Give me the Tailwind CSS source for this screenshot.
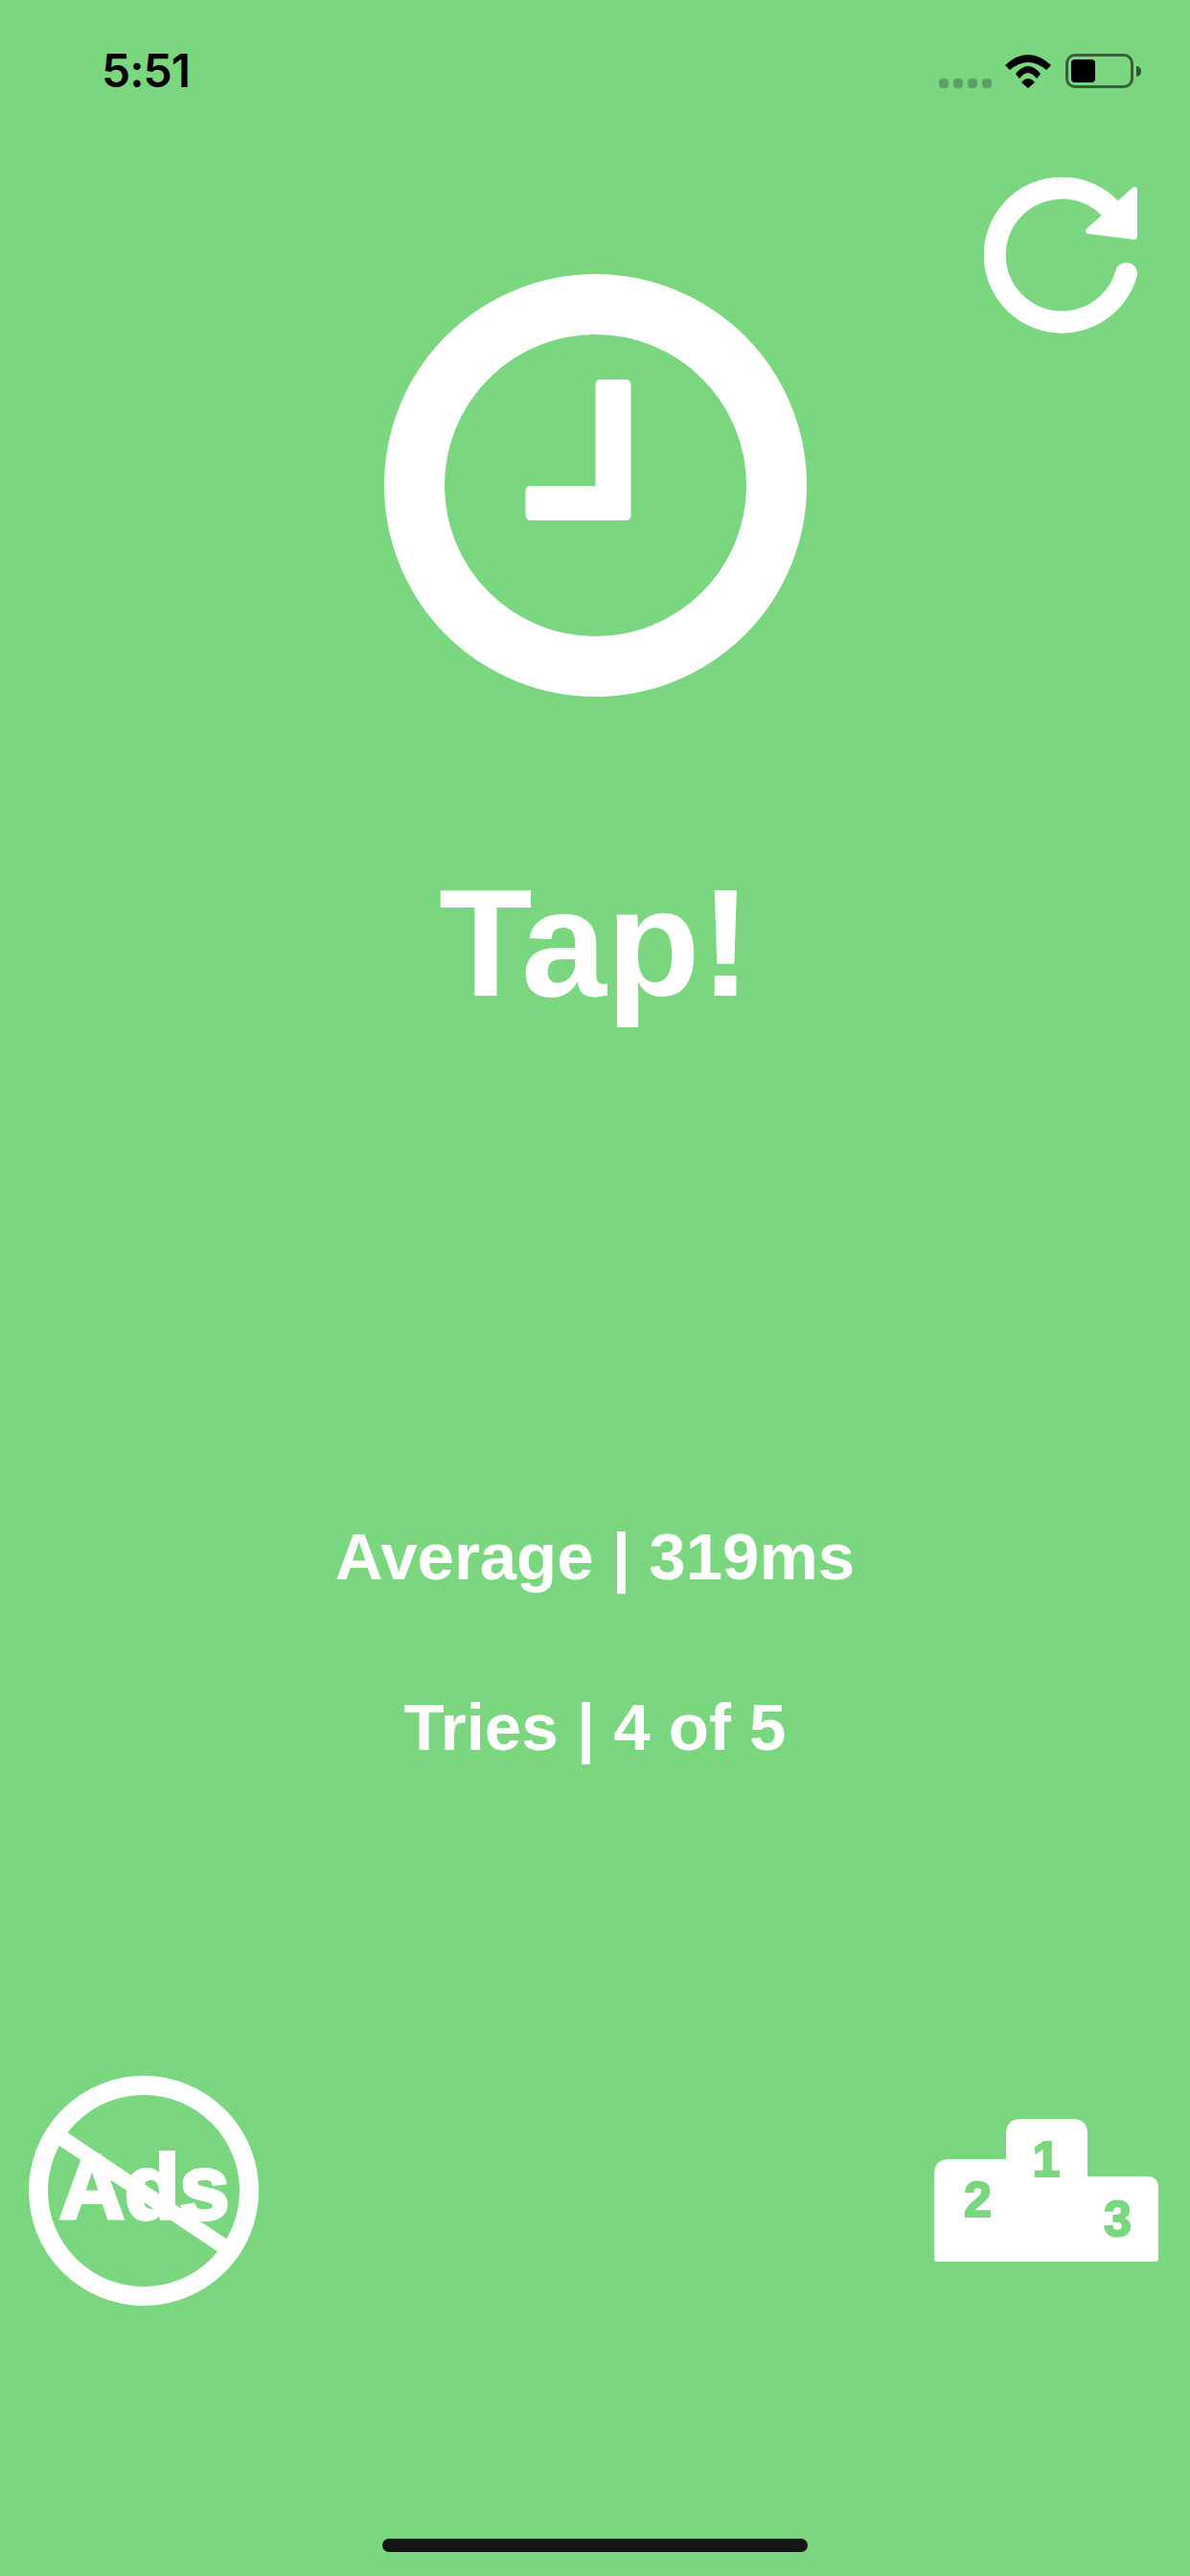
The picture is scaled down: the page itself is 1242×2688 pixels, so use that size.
<!DOCTYPE html>
<html lang="en">
<head>
    <meta charset="UTF-8">
    <meta name="viewport" content="width=device-width, initial-scale=1.0">
    <title>Reaction Test</title>
    <script src="https://cdn.jsdelivr.net/npm/@tailwindcss/browser@4"></script>
</head>
<body class="bg-[#7ad67f]">
    <div class="w-[1242px] h-[2688px] bg-[#7ad67f] flex flex-col overflow-hidden font-['Liberation_Sans',sans-serif] text-white">
        <!-- Status bar -->
        <div class="flex justify-between items-start pt-[55px] pl-[106px] pr-[51px] h-[92px]">
            <span class="text-[48px] leading-[37px] tracking-[-1px] font-['Inter',sans-serif] font-semibold text-black">5:51</span>
            <div class="flex items-start">
                <div class="flex gap-[5px] mt-[27px] mr-[14px]">
                    <span class="w-[10px] h-[10px] rounded-[4px] bg-black/25"></span>
                    <span class="w-[10px] h-[10px] rounded-[4px] bg-black/25"></span>
                    <span class="w-[10px] h-[10px] rounded-[4px] bg-black/25"></span>
                    <span class="w-[10px] h-[10px] rounded-[4px] bg-black/25"></span>
                </div>
                <svg class="mt-[2px] mr-[15px]" width="48" height="35" viewBox="0 0 48 35" fill="#000">
                    <path d="M0 11 Q24 -11 48 11 L43 16 Q24 0 5 16 Z"/>
                    <path d="M11 20 Q24 4 37 20 L33 25 Q24 13 15 25 Z"/>
                    <path d="M17 29 Q24 21 31 29 L24 35 Z"/>
                </svg>
                <div class="w-[71px] h-[36px] mt-[1px] rounded-[10px] border-[3px] border-black/55 p-[3px]">
                    <div class="w-[25px] h-full rounded-[4px] bg-black"></div>
                </div>
                <div class="w-[5px] h-[11px] mt-[14px] ml-[3px] rounded-r-full bg-black/60"></div>
            </div>
        </div>

        <!-- Refresh button -->
        <div class="flex justify-end mt-[93px] pr-[53px]">
            <svg width="162" height="163" viewBox="0 0 162 163" fill="none" stroke="#fff">
                <path d="M148.500 100.500 A70 70 0 1 1 133 34" stroke-width="23" stroke-linecap="round"/>
                <path d="M157 13 L109 56 L157 62 Z" fill="#fff" stroke-width="6" stroke-linejoin="round"/>
            </svg>
        </div>

        <!-- Clock -->
        <div class="flex justify-center -mt-[62px]">
            <svg width="441" height="441" viewBox="0 0 441 441" fill="none" stroke="#fff">
                <circle cx="220.500" cy="220.500" r="189" stroke-width="63"/>
                <path d="M225.500 115 H252.500 V252 H152.500 V226 H225.500 Z" fill="#fff" stroke-width="10" stroke-linejoin="round"/>
            </svg>
        </div>

        <p class="mt-[177px] text-center text-[160px] leading-[160px] font-bold">Tap!</p>

        <div class="flex flex-col items-center gap-[100px] mt-[522px] text-[69px] leading-[78px] font-bold">
            <p>Average | 319ms</p>
            <p>Tries | 4 of 5</p>
        </div>

        <!-- Bottom buttons -->
        <div class="flex justify-between items-start mt-[324px] pl-[30px] pr-[33px]">
            <svg width="240" height="240" viewBox="0 0 240 240" fill="none" stroke="#fff">
                <circle cx="120" cy="120" r="110" stroke-width="20"/>
                <path d="M33 64 L205 179" stroke-width="16"/>
                <text x="32" y="149" fill="#fff" stroke-width="4" font-size="94" font-weight="700" font-family="Liberation Sans">Ads</text>
            </svg>
            <svg class="mt-[45px]" width="234" height="149" viewBox="0 0 234 149">
                <path d="M3 149 Q0 149 0 146 V58 Q0 42 16 42 H75 V16 Q75 0 91 0 H144 Q160 0 160 16 V60 H222 Q234 60 234 72 V146 Q234 149 231 149 Z" fill="#fff"/>
                <g fill="#7ad67f" stroke="#7ad67f" stroke-width="2" font-family="Liberation Sans" font-size="52" font-weight="700" text-anchor="middle">
                    <text x="117" y="60">1</text>
                    <text x="45.500" y="102">2</text>
                    <text x="191.500" y="122">3</text>
                </g>
            </svg>
        </div>

        <!-- Home indicator -->
        <div class="mt-auto mb-[25px] mx-auto w-[444px] h-[14px] rounded-full bg-[#161616]"></div>
    </div>
</body>
</html>
